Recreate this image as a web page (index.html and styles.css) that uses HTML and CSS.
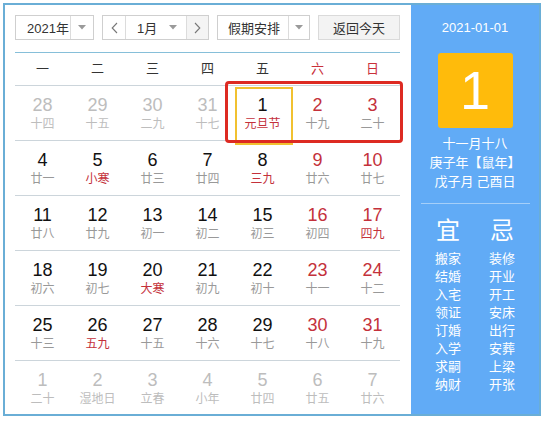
FILE: index.html
```html
<!DOCTYPE html>
<html lang="zh-CN">
<head>
<meta charset="utf-8">
<title>万年历</title>
<link rel="stylesheet" href="styles.css">
</head>
<body>
<div class="cal">
  <div class="main">
    <div class="toolbar">
      <div class="sel sel-year">
        <span class="sel-text">2021年</span>
        <span class="sel-arrow"><svg width="8" height="5" viewBox="0 0 8 5"><path d="M0 0H8L4 4.5Z" fill="#9a9a9a"/></svg></span>
      </div>
      <div class="sel sel-month">
        <span class="nav"><svg width="7" height="12" viewBox="0 0 7 12"><path d="M6 1L1.2 6L6 11" fill="none" stroke="#777" stroke-width="1.1"/></svg></span>
        <span class="sel-text month-text">1月</span>
        <span class="sel-arrow plain"><svg width="8" height="5" viewBox="0 0 8 5"><path d="M0 0H8L4 4.5Z" fill="#9a9a9a"/></svg></span>
        <span class="nav nav-next"><svg width="7" height="12" viewBox="0 0 7 12"><path d="M1 1L5.8 6L1 11" fill="none" stroke="#777" stroke-width="1.1"/></svg></span>
      </div>
      <div class="sel sel-holiday">
        <span class="sel-text">假期安排</span>
        <span class="sel-arrow"><svg width="8" height="5" viewBox="0 0 8 5"><path d="M0 0H8L4 4.5Z" fill="#9a9a9a"/></svg></span>
      </div>
      <div class="btn-today">返回今天</div>
    </div>
    <div class="week">
      <span>一</span><span>二</span><span>三</span><span>四</span><span>五</span><span class="red">六</span><span class="red">日</span>
    </div>
    <div class="days">
      <div class="day out"><b>28</b><i>十四</i></div>
      <div class="day out"><b>29</b><i>十五</i></div>
      <div class="day out"><b>30</b><i>二九</i></div>
      <div class="day out"><b>31</b><i>十七</i></div>
      <div class="day today"><b>1</b><i class="fest">元旦节</i></div>
      <div class="day we"><b>2</b><i>十九</i></div>
      <div class="day we"><b>3</b><i>二十</i></div>

      <div class="day"><b>4</b><i>廿一</i></div>
      <div class="day"><b>5</b><i class="fest">小寒</i></div>
      <div class="day"><b>6</b><i>廿三</i></div>
      <div class="day"><b>7</b><i>廿四</i></div>
      <div class="day"><b>8</b><i class="fest">三九</i></div>
      <div class="day we"><b>9</b><i>廿六</i></div>
      <div class="day we"><b>10</b><i>廿七</i></div>

      <div class="day"><b>11</b><i>廿八</i></div>
      <div class="day"><b>12</b><i>廿九</i></div>
      <div class="day"><b>13</b><i>初一</i></div>
      <div class="day"><b>14</b><i>初二</i></div>
      <div class="day"><b>15</b><i>初三</i></div>
      <div class="day we"><b>16</b><i>初四</i></div>
      <div class="day we"><b>17</b><i class="fest">四九</i></div>

      <div class="day"><b>18</b><i>初六</i></div>
      <div class="day"><b>19</b><i>初七</i></div>
      <div class="day"><b>20</b><i class="fest">大寒</i></div>
      <div class="day"><b>21</b><i>初九</i></div>
      <div class="day"><b>22</b><i>初十</i></div>
      <div class="day we"><b>23</b><i>十一</i></div>
      <div class="day we"><b>24</b><i>十二</i></div>

      <div class="day"><b>25</b><i>十三</i></div>
      <div class="day"><b>26</b><i class="fest">五九</i></div>
      <div class="day"><b>27</b><i>十五</i></div>
      <div class="day"><b>28</b><i>十六</i></div>
      <div class="day"><b>29</b><i>十七</i></div>
      <div class="day we"><b>30</b><i>十八</i></div>
      <div class="day we"><b>31</b><i>十九</i></div>

      <div class="day out"><b>1</b><i>二十</i></div>
      <div class="day out"><b>2</b><i>湿地日</i></div>
      <div class="day out"><b>3</b><i>立春</i></div>
      <div class="day out"><b>4</b><i>小年</i></div>
      <div class="day out"><b>5</b><i>廿四</i></div>
      <div class="day out"><b>6</b><i>廿五</i></div>
      <div class="day out"><b>7</b><i>廿六</i></div>

      <div class="holiday-mark"></div>
    </div>
  </div>
  <div class="side">
    <div class="side-date">2021-01-01</div>
    <div class="big-day">1</div>
    <div class="lunar">
      <div>十一月十八</div>
      <div>庚子年【鼠年】</div>
      <div>戊子月 己酉日</div>
    </div>
    <div class="side-sep"></div>
    <div class="yiji">
      <div class="col">
        <div class="head">宜</div>
        <div>搬家</div><div>结婚</div><div>入宅</div><div>领证</div><div>订婚</div><div>入学</div><div>求嗣</div><div>纳财</div>
      </div>
      <div class="col">
        <div class="head">忌</div>
        <div>装修</div><div>开业</div><div>开工</div><div>安床</div><div>出行</div><div>安葬</div><div>上梁</div><div>开张</div>
      </div>
    </div>
  </div>
</div>
</body>
</html>
```

FILE: styles.css
```css
* { box-sizing: border-box; }
html, body { margin: 0; padding: 0; background: #fff; }
body {
  font-family: "Liberation Sans", Arial, "Noto Sans CJK SC", sans-serif;
  color: #333;
}
.cal {
  margin: 3px;
  width: 538px;
  height: 413px;
  border: 2px solid #6aaed6;
  display: flex;
}
.main {
  width: 406px;
  padding: 10px 11px 0 10px;
}
.toolbar {
  display: flex;
  gap: 8px;
  height: 25px;
  margin-bottom: 12px;
  font-size: 13px;
}
.sel {
  display: flex;
  align-items: stretch;
  border: 1px solid #cfcfcf;
  background: #fff;
  height: 25px;
}
.sel-text {
  display: flex;
  align-items: center;
  color: #333;
}
.sel-arrow {
  display: flex;
  align-items: center;
  justify-content: center;
  border-left: 1px solid #dcdcdc;
}
.sel-arrow.plain { border-left: none; }
.sel-year { width: 79px; }
.sel-year .sel-text { width: 54px; padding-left: 11px; }
.sel-year .sel-arrow { flex: 1; }
.sel-month { width: 107px; }
.nav {
  width: 23px;
  display: flex;
  align-items: center;
  justify-content: center;
  border-right: 1px solid #dcdcdc;
}
.nav-next {
  width: 22px;
  border-right: none;
  border-left: 1px solid #dcdcdc;
  background: #f4f4f4;
}
.month-text { width: 34px; padding-left: 11px; }
.sel-month .sel-arrow { width: 26px; }
.sel-holiday { width: 93px; }
.sel-holiday .sel-text { width: 70px; padding-left: 10px; }
.sel-holiday .sel-arrow { flex: 1; }
.btn-today {
  width: 82px;
  height: 25px;
  border: 1px solid #dadada;
  background: #f3f3f3;
  display: flex;
  align-items: center;
  justify-content: center;
  color: #333;
}
.week {
  display: grid;
  grid-template-columns: repeat(7, 55px);
  height: 33px;
  border-top: 1px solid #86bfd9;
  font-size: 13px;
  line-height: 32px;
  text-align: center;
  color: #333;
}
.week .red { color: #c9303a; }
.days {
  position: relative;
  display: grid;
  grid-template-columns: repeat(7, 55px);
  grid-auto-rows: 55px;
}
.day {
  border-top: 1px solid #ccd5db;
  padding-top: 9px;
  text-align: center;
  position: relative;
}
.day b {
  display: block;
  font-weight: normal;
  font-size: 18px;
  line-height: 20px;
  color: #111;
}
.day i {
  display: block;
  font-style: normal;
  font-size: 12px;
  line-height: 16px;
  color: #999;
  font-family: "Noto Sans CJK SC", sans-serif;
}
.day.we b { color: #c4313b; }
.day i.fest { color: #c4313b; }
.day.out b, .day.out i { color: #bdbdbd; }
.day.today::after {
  content: "";
  position: absolute;
  left: 0;
  top: 1px;
  width: 54px;
  height: 54px;
  border: 2px solid #f1c130;
}
.holiday-mark {
  position: absolute;
  left: 210px;
  top: -4px;
  width: 178px;
  height: 62px;
  border: 3px solid #dd2a22;
  border-radius: 4px;
  pointer-events: none;
}
.side {
  width: 128px;
  background: #61abf6;
  color: #fff;
  display: flex;
  flex-direction: column;
  align-items: center;
}
.side-date {
  margin-top: 13px;
  font-size: 13px;
  line-height: 20px;
}
.big-day {
  margin-top: 15px;
  width: 75px;
  height: 75px;
  background: #ffbb0b;
  border-radius: 3px;
  font-size: 54px;
  line-height: 75px;
  text-align: center;
  color: #fff;
}
.lunar {
  margin-top: 5px;
  font-family: "Noto Sans CJK SC", sans-serif;
  font-size: 13px;
  line-height: 19px;
  text-align: center;
}
.side-sep {
  margin-top: 13px;
  width: 109px;
  height: 1px;
  background: #a5cff9;
}
.yiji {
  margin-top: 13px;
  display: grid;
  grid-template-columns: 54px 54px;
  font-family: "Noto Sans CJK SC", sans-serif;
  font-size: 13px;
  line-height: 18px;
  text-align: center;
}
.yiji .head {
  font-size: 24px;
  line-height: 24px;
  margin-bottom: 8px;
}
```
